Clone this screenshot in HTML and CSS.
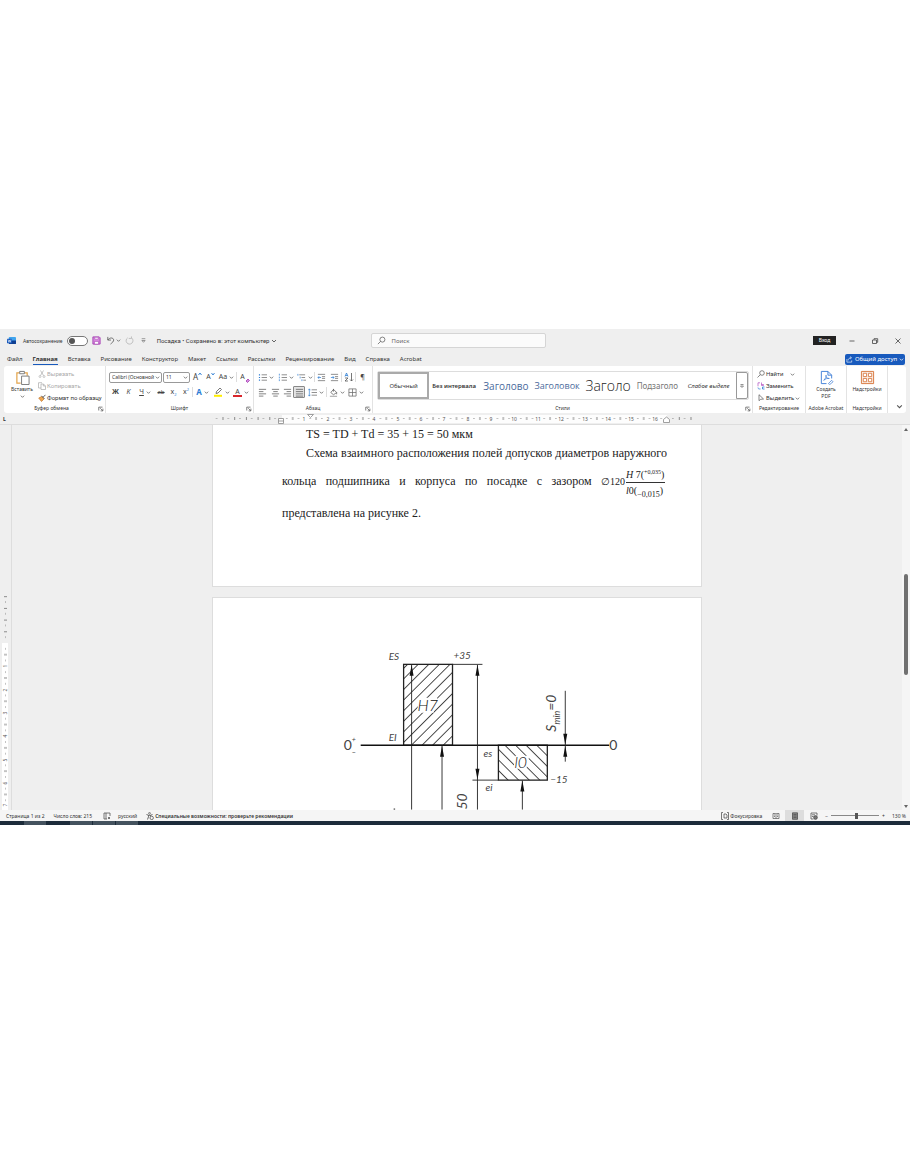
FILE: index.html
```html
<!DOCTYPE html>
<html lang="ru">
<head>
<meta charset="utf-8">
<title>Посадка</title>
<link rel="stylesheet" href="styles.css">
</head>
<body>
<svg class="defs" aria-hidden="true">
  <symbol id="chev" viewBox="0 0 6 6"><path d="M1 2l2 2 2-2" fill="none" stroke="#555" stroke-width=".9"/></symbol>
  <symbol id="launch" viewBox="0 0 8 8"><path d="M1 6V1.500h5M3 3l3 3M6.500 3.500v3h-3" fill="none" stroke="#444" stroke-width=".9"/></symbol>
  <symbol id="lines" viewBox="0 0 10 10"><path d="M4 2h6M4 5h6M4 8h6" stroke="#666" stroke-width=".8"/></symbol>
</svg>
<div class="app">
  <header class="titlebar">
    <svg class="logo" viewBox="0 0 10 10"><rect x="2" y="1" width="8" height="8" rx="1" fill="#41a5ee"/><path d="M2 5h8v3a1 1 0 0 1-1 1H3a1 1 0 0 1-1-1z" fill="#103f91"/><rect x="0" y="3" width="5.500" height="5" rx=".6" fill="#185abd"/><path d="M1.200 4l.8 3 .8-2.500.8 2.500.8-3" fill="none" stroke="#fff" stroke-width=".6"/></svg>
    <label class="autosave">Автосохранение <input type="checkbox" role="switch" class="switch"></label>
    <button class="ic save" aria-label="Сохранить"><svg viewBox="0 0 10 10"><path d="M1 1h7l1 1v7H1z" fill="#d98be0" stroke="#a33bb0"/><path d="M3 1.500h4v2H3zM2.800 6h4.400v3H2.800z" fill="#fff" stroke="#a33bb0" stroke-width=".6"/></svg></button>
    <button class="ic wide" aria-label="Отменить"><svg viewBox="0 0 10 10"><path d="M2 1v3.500h3.500M2 4.500C4 1.500 8 1.500 8.500 4.200 8.800 6 7 7.200 5 9" fill="none" stroke="#555" stroke-width=".9"/></svg><svg class="chev"><use href="#chev"/></svg></button>
    <button class="ic" aria-label="Повторить"><svg viewBox="0 0 10 10"><path d="M3 2a3.800 3.800 0 1 0 4.500.3M7.200.5v2.200h-3" fill="none" stroke="#b5b5b5" stroke-width=".9"/></svg></button>
    <button class="ic" aria-label="Настройка панели"><svg viewBox="0 0 10 10"><path d="M3 3h4M3.200 5h3.600L5 7z" fill="none" stroke="#777" stroke-width=".8"/></svg></button>
    <button class="doc">Посадка • Сохранено в: этот компьютер <svg class="chev big"><use href="#chev"/></svg></button>
    <label class="search"><svg viewBox="0 0 10 10"><circle cx="6" cy="4" r="2.800" fill="none" stroke="#555" stroke-width=".8"/><path d="M4 6L1 9" stroke="#555" stroke-width=".8"/></svg><input type="search" placeholder="Поиск" aria-label="Поиск"></label>
    <button class="login">Вход</button>
    <div class="wincontrols">
      <button aria-label="Свернуть"><svg viewBox="0 0 8 8"><path d="M1.500 4h5" stroke="#444" stroke-width=".8"/></svg></button>
      <button aria-label="Восстановить"><svg viewBox="0 0 8 8"><path d="M1.500 3h4v3.500h-4zM3 2.800V1.700h3.700v3.600H5.700" fill="none" stroke="#444" stroke-width=".8"/></svg></button>
      <button aria-label="Закрыть"><svg viewBox="0 0 8 8"><path d="M1.500 1.500l5 5M6.500 1.500l-5 5" stroke="#444" stroke-width=".8"/></svg></button>
    </div>
  </header>
  <nav class="tabs">
    <a href="#">Файл</a><a href="#" class="active">Главная</a><a href="#">Вставка</a><a href="#">Рисование</a><a href="#">Конструктор</a><a href="#">Макет</a><a href="#">Ссылки</a><a href="#">Рассылки</a><a href="#">Рецензирование</a><a href="#">Вид</a><a href="#">Справка</a><a href="#">Acrobat</a>
    <button class="share"><svg viewBox="0 0 8 8"><path d="M1 3.500V7h5.500V5M2.500 5c0-2 1.500-3 3.500-3M4.700.7L6.300 2 4.700 3.500" fill="none" stroke="#fff" stroke-width=".7"/></svg>Общий доступ<svg class="light" viewBox="0 0 6 6"><path d="M1 2l2 2 2-2" fill="none" stroke="#fff" stroke-width=".9"/></svg></button>
  </nav>
  <section class="ribbon">
    <div class="group clipboard">
      <div class="body">
        <button class="tall paste"><svg viewBox="0 0 16 16"><path d="M5 3H2v11h4M10 3h3v3" fill="none" stroke="#e3a44c" stroke-width="1.300"/><path d="M5 1.500h5V4H5z" fill="#fff" stroke="#777"/><path d="M7 6.500h8v9H7z" fill="#fff" stroke="#777"/></svg><span>Вставить</span><svg class="chev"><use href="#chev"/></svg></button>
        <div class="stack">
          <button class="line off"><svg viewBox="0 0 8 8"><path d="M2.500.5l3 5M5.500.5l-3 5" stroke="#aaa" stroke-width=".7"/><circle cx="2" cy="6.500" r="1" fill="none" stroke="#aaa" stroke-width=".6"/><circle cx="6" cy="6.500" r="1" fill="none" stroke="#aaa" stroke-width=".6"/></svg>Вырезать</button>
          <button class="line off"><svg viewBox="0 0 8 8"><path d="M3 6H.5V.7h3.500M3 2h2.500L7.500 4v3.500H3zM5.300 2v2h2" fill="none" stroke="#aaa" stroke-width=".7"/></svg>Копировать</button>
          <button class="line"><svg viewBox="0 0 8 8"><path d="M.7 4l3-1.500L6 5 3.500 7.500z" fill="#f0a850" stroke="#b86a20" stroke-width=".6"/><path d="M3.500 1.800l3 3M5 3.300L7.500.8" fill="none" stroke="#555" stroke-width=".9"/></svg>Формат по образцу</button>
        </div>
      </div>
      <div class="caption"><span>Буфер обмена</span><button class="launch" aria-label="Буфер обмена"><svg><use href="#launch"/></svg></button></div>
    </div>
    <div class="group font">
      <div class="body rows">
        <div class="row">
          <span class="pick name"><select aria-label="Шрифт"><option>Calibri (Основной текст)</option></select><svg class="chev"><use href="#chev"/></svg></span>
          <span class="pick size"><select aria-label="Размер"><option>11</option></select><svg class="chev"><use href="#chev"/></svg></span>
          <button class="t w13 lg">A<svg class="mark" viewBox="0 0 4 4"><path d="M.5 3L2 1l1.500 2" fill="none" stroke="#2b7cd3" stroke-width=".9"/></svg></button><button class="t w13">A<svg class="mark" viewBox="0 0 4 4"><path d="M.5 1L2 3l1.500-2" fill="none" stroke="#2b7cd3" stroke-width=".9"/></svg></button><button class="t w19">Aa<svg class="chev"><use href="#chev"/></svg></button><i class="sep"></i>
          <button class="t w16">A<svg class="eraser" viewBox="0 0 5 5"><path d="M1 3l2-2 1.500 1.500-2 2z" fill="#d48ae0" stroke="#a33bb0" stroke-width=".8"/></svg></button>
        </div>
        <div class="row">
          <button class="t w13"><b>Ж</b></button><button class="t w13"><em>К</em></button><button class="t w20"><u>Ч</u><svg class="chev"><use href="#chev"/></svg></button><button class="t w12 sm"><s>ab</s></button><button class="t w13">x<sub>2</sub></button><button class="t w12">x<sup>2</sup></button><i class="sep"></i>
          <button class="t w19 glow">A<svg class="chev"><use href="#chev"/></svg></button><button class="t w19" aria-label="Выделение"><svg class="i10" viewBox="0 0 10 10"><path d="M3 6.500l.5-2L7 1l1.500 1.500L5 6z" fill="#fff" stroke="#555" stroke-width=".8"/><path d="M1 8.800h8" stroke="#ffee00" stroke-width="2"/></svg><svg class="chev"><use href="#chev"/></svg></button><button class="t w20"><span class="redline">A</span><svg class="chev"><use href="#chev"/></svg></button>
        </div>
      </div>
      <div class="caption"><span>Шрифт</span><button class="launch" aria-label="Шрифт"><svg><use href="#launch"/></svg></button></div>
    </div>
    <div class="group para">
      <div class="body rows">
        <div class="row">
          <button class="t w20" aria-label="Маркеры"><svg class="i9" viewBox="0 0 10 10"><use href="#lines"/><path d="M1 2h1.300M1 5h1.300M1 8h1.300" stroke="#2b7cd3" stroke-width="1.300"/></svg><svg class="chev"><use href="#chev"/></svg></button><button class="t w19" aria-label="Нумерация"><svg class="i9" viewBox="0 0 10 10"><use href="#lines"/><path d="M1.500.8v2M1.500 4v2M1.500 7v2" stroke="#2b7cd3" stroke-width=".8"/></svg><svg class="chev"><use href="#chev"/></svg></button><button class="t w19" aria-label="Многоуровневый список"><svg class="i9" viewBox="0 0 10 10"><path d="M2.500 2H9M5 5h4M7 8h3" stroke="#666" stroke-width=".8"/><path d="M1 1v2M3.500 4v2M5.500 7v2" stroke="#2b7cd3" stroke-width=".8"/></svg><svg class="chev"><use href="#chev"/></svg></button><i class="sep"></i>
          <button class="t w13" aria-label="Уменьшить отступ"><svg class="i9" viewBox="0 0 10 10"><path d="M1 1.500h8M5.500 4H9M5.500 6H9M1 8.500h8" stroke="#666" stroke-width=".8"/><path d="M4.500 5H1M2.500 3.500L1 5l1.500 1.500" fill="none" stroke="#2b7cd3" stroke-width=".8"/></svg></button><button class="t w13" aria-label="Увеличить отступ"><svg class="i9" viewBox="0 0 10 10"><path d="M1 1.500h8M5.500 4H9M5.500 6H9M1 8.500h8" stroke="#666" stroke-width=".8"/><path d="M1 5h3.500M3 3.500L4.500 5 3 6.500" fill="none" stroke="#2b7cd3" stroke-width=".8"/></svg></button><i class="sep"></i>
          <button class="t w13" aria-label="Сортировка"><svg class="i10" viewBox="0 0 10 10"><path d="M1 4.500L2.500 1 4 4.500M1.500 3.500h2" fill="none" stroke="#2b7cd3" stroke-width=".8"/><path d="M1 6h3L1 9h3M7.500 1v8M6 7.500L7.500 9 9 7.500" fill="none" stroke="#555" stroke-width=".8"/></svg></button><i class="sep"></i><button class="t w13">¶</button>
        </div>
        <div class="row">
          <button class="t w13" aria-label="По левому краю"><svg class="i9" viewBox="0 0 10 10"><path d="M1 1.500h8M1 4h5M1 6.500h8M1 9h5" stroke="#555" stroke-width=".8"/></svg></button><button class="t w12" aria-label="По центру"><svg class="i9" viewBox="0 0 10 10"><path d="M1 1.500h8M2.500 4h5M1 6.500h8M2.500 9h5" stroke="#555" stroke-width=".8"/></svg></button><button class="t w12" aria-label="По правому краю"><svg class="i9" viewBox="0 0 10 10"><path d="M1 1.500h8M4 4h5M1 6.500h8M4 9h5" stroke="#555" stroke-width=".8"/></svg></button><button class="t w12 on" aria-label="По ширине"><svg class="i9" viewBox="0 0 10 10"><path d="M1 1.500h8M1 4h8M1 6.500h8M1 9h8" stroke="#555" stroke-width=".8"/></svg></button><button class="t w21" aria-label="Интервал"><svg class="i9" viewBox="0 0 10 10"><use href="#lines"/><path d="M1.500 1v8M.3 2.500L1.500 1l1.200 1.500M.3 7.500L1.500 9l1.200-1.500" fill="none" stroke="#2b7cd3" stroke-width=".7"/></svg><svg class="chev"><use href="#chev"/></svg></button><i class="sep"></i>
          <button class="t w19" aria-label="Заливка"><svg class="i9" viewBox="0 0 10 10"><path d="M2 5l3-3.500L8.500 5 5 7.500zM5 1v3M8.500 5v2" fill="none" stroke="#555" stroke-width=".8"/><path d="M1 9.200h8" stroke="#999"/></svg><svg class="chev"><use href="#chev"/></svg></button><button class="t w19" aria-label="Границы"><svg class="i9" viewBox="0 0 10 10"><path d="M1 1h8v8H1zM5 1v8M1 5h8" fill="none" stroke="#666" stroke-width=".8"/></svg><svg class="chev"><use href="#chev"/></svg></button>
        </div>
      </div>
      <div class="caption"><span>Абзац</span><button class="launch" aria-label="Абзац"><svg><use href="#launch"/></svg></button></div>
    </div>
    <div class="group styles">
      <div class="body">
        <div class="gallery">
          <button class="chosen">Обычный</button><button class="semi">Без интервала</button><button class="h1">Заголово</button><button class="h2">Заголовок</button><button class="h0">Заголо</button><button class="sub">Подзаголо</button><button class="weak">Слабое выделе</button>
          <button class="more" aria-label="Ещё"><svg viewBox="0 0 6 6"><path d="M1.500 1.500h3M1.500 3L3 4.500 4.500 3z" fill="none" stroke="#666" stroke-width=".7"/></svg></button>
        </div>
      </div>
      <div class="caption"><span>Стили</span><button class="launch" aria-label="Стили"><svg><use href="#launch"/></svg></button></div>
    </div>
    <div class="group edit">
      <div class="body"><div class="stack">
        <button class="line"><svg viewBox="0 0 8 8"><circle cx="5" cy="3" r="2.300" fill="none" stroke="#555" stroke-width=".7"/><path d="M3.300 4.700L.5 7.500" stroke="#555" stroke-width=".7"/></svg>Найти<svg class="chev far"><use href="#chev"/></svg></button>
        <button class="line"><svg viewBox="0 0 8 8"><path d="M3 .8H1v3.500M4.500.5v3M4.500 2.500h2v1h-2" fill="none" stroke="#b04ec0" stroke-width=".7"/><path d="M1 5.500c0 1.500 1 1.500 2.500 1.500M7.500 5H5.500v2h2" fill="none" stroke="#2b7cd3" stroke-width=".8"/></svg>Заменить</button>
        <button class="line"><svg viewBox="0 0 8 8"><path d="M2 .7v6L3.700 5.300 6.500 5z" fill="none" stroke="#555" stroke-width=".7"/></svg>Выделить<svg class="chev"><use href="#chev"/></svg></button>
      </div></div>
      <div class="caption"><span>Редактирование</span></div>
    </div>
    <div class="group acro">
      <div class="body"><button class="tall"><svg viewBox="0 0 16 16"><path d="M8 14.500H2.500V1.500h7l4 4V9M9.500 1.500v4h4" fill="none" stroke="#3f7fd6"/><path d="M5 11c2-2 3-4 2.500-5.500C7 8 9 9.500 11 9c-2-.6-4 .5-6 2zM10 14.500l3.500-3.500 1.500 1.500-3.500 3z" fill="none" stroke="#3f7fd6" stroke-width=".8"/></svg><span>Создать<br>PDF</span></button></div>
      <div class="caption"><span>Adobe Acrobat</span></div>
    </div>
    <div class="group addin">
      <div class="body"><button class="tall"><svg viewBox="0 0 16 16"><path d="M1.500 1.500h13v13h-13z" fill="#fbeee6" stroke="#d6753c"/><path d="M3.500 3.500H7V7H3.500zM9 3.500h3.500V7H9zM3.500 9H7v3.500H3.500zM9 9h3.500v3.500H9z" fill="#fff" stroke="#d6753c" stroke-width=".9"/></svg><span>Надстройки</span></button></div>
      <div class="caption"><span>Надстройки</span></div>
    </div>
    <button class="collapse" aria-label="Свернуть ленту"><svg class="chev big"><use href="#chev"/></svg></button>
  </section>
  <div class="ruler">
    <span class="corner">L</span>
    <svg class="hruler" viewBox="0 0 490 11">
      <defs><pattern id="pa" x="69" width="23.400" height="11" patternUnits="userSpaceOnUse"><path d="M5.800 5v1M17.500 5v1M11.700 4v3" stroke="#888" stroke-width="1"/></pattern>
      <pattern id="pb" x="69" width="11.700" height="11" patternUnits="userSpaceOnUse"><path d="M5.800 5v1M.5 4v3" stroke="#888" stroke-width="1"/></pattern></defs>
      <rect x="70" y="2" width="385" height="8" fill="#fdfdfd"/>
      <rect x="0" width="69" height="11" fill="url(#pb)"/><rect x="70" width="385" height="11" fill="url(#pa)"/><rect x="457" width="24" height="11" fill="url(#pb)"/>
      <g class="nums"><text x="92" y="8">1</text><text x="116" y="8">2</text><text x="139" y="8">3</text><text x="162" y="8">4</text><text x="186" y="8">5</text><text x="209" y="8">6</text><text x="232" y="8">7</text><text x="256" y="8">8</text><text x="279" y="8">9</text><text x="302" y="8">10</text><text x="326" y="8">11</text><text x="349" y="8">12</text><text x="373" y="8">13</text><text x="396" y="8">14</text><text x="419" y="8">15</text><text x="443" y="8">16</text></g>
      <path d="M66.500 5.500h5v5h-5zM66.500 8h5M95.500 1.500h6L98.500 4.500zM451.500 9.500v-3l3-2.500 3 2.500v3z" fill="#fff" stroke="#888" stroke-width=".8"/>
    </svg>
  </div>
  <main class="work">
    <svg class="vruler" viewBox="0 0 11 385">
      <defs><pattern id="pv" y="218" width="12" height="23.300" patternUnits="userSpaceOnUse"><path d="M5 5.800h1M4 11.700h3M5 17.500h1" stroke="#888"/></pattern>
      <pattern id="pw" y="218" width="12" height="11.700" patternUnits="userSpaceOnUse"><path d="M4 .5h3M5 5.800h1" stroke="#888"/></pattern></defs>
      <rect x="2" y="218" width="6" height="167" fill="#fff"/><rect y="171" width="11" height="46" fill="url(#pw)"/><rect y="219" width="11" height="166" fill="url(#pv)"/>
      <g class="nums"><text transform="translate(7 241) rotate(-90)">1</text><text transform="translate(7 265) rotate(-90)">2</text><text transform="translate(7 288) rotate(-90)">3</text><text transform="translate(7 311) rotate(-90)">4</text><text transform="translate(7 335) rotate(-90)">5</text><text transform="translate(7 358) rotate(-90)">6</text><text transform="translate(7 380) rotate(-90)">7</text></g>
    </svg>
    <div class="canvas">
      <article class="page first">
        <p class="ind">TS = TD + Td = 35 + 15 = 50 мкм</p>
        <p class="ind full">Схема взаимного расположения полей допусков диаметров наружного</p>
        <p class="full formula">кольца подшипника и корпуса по посадке с зазором <span class="math">∅120<span class="frac"><span class="num"><i>H</i> 7(<sup>+0,035</sup>)</span><span class="den"><i>l</i>0(<sub>−0,015</sub>)</span></span></span></p>
        <p class="last">представлена на рисунке 2.</p>
      </article>
      <article class="page second">
        <svg class="drawing" viewBox="212 598 489 212">
          <defs>
            <pattern id="hat" width="7.500" height="7.500" patternUnits="userSpaceOnUse" patternTransform="rotate(45 403 665)"><path d="M0 0v7.500" stroke="#222" stroke-width="1.600"/></pattern>
            <pattern id="hat2" width="7.500" height="7.500" patternUnits="userSpaceOnUse" patternTransform="rotate(-45 498 746)"><path d="M0 0v7.500" stroke="#222" stroke-width="1.600"/></pattern>
          </defs>
          <rect x="403" y="664.500" width="49" height="81" fill="url(#hat)" stroke="#222" stroke-width="1.300"/>
          <rect x="498" y="745.500" width="49" height="35" fill="url(#hat2)" stroke="#222" stroke-width="1.300"/>
          <path d="M419 698h18l-4 15h-17zM515 756h14l-3 13h-13z" fill="#fff"/>
          <path d="M360 745.500h249" stroke="#111" stroke-width="1.500"/>
          <path d="M452 664.500h30M472 780.500h26M477 665v145M411 665v145M441.500 746v64M522 781v29M565 691v71" stroke="#222" stroke-width=".9"/>
          <path d="M411 665l2 11h-4zM441.500 746l2 11h-4zM477 665l2 11h-4zM477 780l2-11h-4zM522 781l2 11h-4zM565 745l2-11h-4zM565 746l2 11h-4z" fill="#111"/>
          <path d="M393 809.500h1.500" stroke="#222"/>
          <g class="gost">
            <text x="388" y="660">ES</text><text x="453" y="659">+35</text><text x="388" y="741">EI</text><text x="483" y="757">es</text><text x="485" y="791">ei</text><text x="550" y="783">−15</text>
            <text class="big" x="417" y="711">H7</text><text class="big" x="514" y="768">l0</text>
            <text class="zero" x="343" y="750">0</text><text class="zero" x="609" y="750">0</text><text x="351" y="742" class="tiny">+</text><text x="351" y="755" class="tiny">−</text>
            <text class="mid" transform="translate(556 732) rotate(-90)">S<tspan dy="4" class="tinysub">min</tspan><tspan dy="-4">=0</tspan></text>
            <text class="mid" transform="translate(467 810) rotate(-90)">50</text>
          </g>
        </svg>
      </article>
    </div>
    <div class="scroll"><svg viewBox="0 0 8 8"><path d="M2 6h4L4 3z" fill="#666"/></svg><i class="thumb"></i><svg viewBox="0 0 8 8"><path d="M2 3h4L4 6z" fill="#666"/></svg></div>
  </main>
  <footer class="status">
    <span>Страница 1 из 2</span><span>Число слов: 215</span>
    <svg viewBox="0 0 8 8"><path d="M4 7H1V1h6v3M3 1v6M5 5l2 2M7 5L5 7" fill="none" stroke="#555" stroke-width=".8"/></svg>
    <span>русский</span>
    <span class="access"><svg viewBox="0 0 8 8"><circle cx="3.500" cy="1.300" r=".9" fill="none" stroke="#444" stroke-width=".6"/><path d="M.5 2.500l2 .8v1.500L1.500 7.500M6.500 2.500l-2 .8v1M2.500 3.300h2" fill="none" stroke="#444" stroke-width=".8"/><circle cx="5.700" cy="5.900" r="1.700" fill="none" stroke="#444" stroke-width=".7"/></svg>Специальные возможности: проверьте рекомендации</span>
    <span class="focus"><svg viewBox="0 0 8 8"><path d="M2 .5H.5v7H2M6 .5h1.500v7H6M3 2h2l1 1v3H3z" fill="none" stroke="#444" stroke-width=".7"/></svg>Фокусировка</span>
    <button class="view" aria-label="Режим чтения"><svg viewBox="0 0 8 8"><path d="M1 1.500h2.500l.5.500.5-.5H7V6.500H1zM4 2v4.500M2 3h1M2 4.500h1M5 3h1M5 4.500h1" fill="none" stroke="#555" stroke-width=".7"/></svg></button>
    <button class="view cur" aria-label="Разметка страницы"><svg viewBox="0 0 8 8"><path d="M1.500.8h5v6.500h-5z" fill="#888" stroke="#444" stroke-width=".7"/><path d="M2.500 2.500h3M2.500 4h3M2.500 5.500h3" stroke="#444" stroke-width=".6"/></svg></button>
    <button class="view" aria-label="Веб-документ"><svg viewBox="0 0 8 8"><path d="M1 1h6v2.500M1 1v6h2.500M2 2.800h3M2 4.500h1.500" fill="none" stroke="#444" stroke-width=".7"/><circle cx="5.500" cy="5.500" r="1.900" fill="#777" stroke="#444" stroke-width=".6"/></svg></button>
    <span class="zoomer"><span>−</span><input type="range" min="0" max="100" value="54" aria-label="Масштаб"><span>+</span><span class="pct">130 %</span></span>
  </footer>
  <div class="taskbar"><i></i><i></i><i></i><i></i></div>
</div>
</body>
</html>
```
FILE: styles.css
```css
* { box-sizing: border-box; }
body { margin: 0; padding-top: 329px; background: #fff; color: #333; font: 6px/8px "Noto Sans", "Open Sans", sans-serif; }
button, input, select { font: inherit; color: inherit; background: none; border: 0; padding: 0; margin: 0; }
a { color: inherit; text-decoration: none; }
svg { display: block; flex: none; }
.defs { position: absolute; width: 0; height: 0; }
.app { background: #efefef; overflow: hidden; }
.chev { width: 5px; height: 5px; }
.chev.big { width: 7px; height: 7px; }

.titlebar { display: flex; align-items: center; height: 23px; padding: 0 1px 0 7px; white-space: nowrap; }
.logo { width: 9px; height: 9px; }
.autosave { display: flex; align-items: center; gap: 4px; margin-left: 7px; font-size: 5px; }
.switch { appearance: none; width: 21px; height: 10px; border: 1px solid #777; border-radius: 5px; background: #fff; display: flex; align-items: center; }
.switch::before { content: ""; width: 6px; height: 6px; margin-left: 1px; border-radius: 50%; background: #555; }
.ic { display: flex; align-items: center; width: 14px; }
.ic svg:first-child { width: 9px; height: 9px; }
.ic.save { margin-left: 4px; }
.ic.wide { width: 19px; gap: 1px; }
.doc { display: flex; align-items: center; gap: 2px; margin-left: 4px; font-family: Roboto, sans-serif; font-size: 6px; }
.doc .big { width: 6px; height: 6px; }
.search { display: flex; align-items: center; gap: 5px; width: 175px; height: 15px; margin-left: 94px; padding: 0 5px; background: #fbfbfb; border: 1px solid #d5d5d5; border-radius: 2px; }
.search svg { width: 9px; height: 9px; }
.search input { width: 100%; outline: 0; }
.search input::placeholder { color: #666; opacity: 1; }
.login { width: 23px; height: 9px; margin-left: auto; background: #222; color: #fff; font-size: 5px; line-height: 9px; }
.wincontrols { display: flex; margin-left: 4px; }
.wincontrols button { width: 23px; display: flex; justify-content: center; }
.wincontrols svg { width: 8px; height: 8px; }

.tabs { display: flex; align-items: center; gap: 10px; height: 14px; padding: 0 5px 0 7px; white-space: nowrap; }
.tabs a { height: 12px; line-height: 12px; }
.tabs .active { font-weight: 700; border-bottom: 1px solid #185abd; }
.share { display: flex; align-items: center; justify-content: center; gap: 2px; width: 60px; height: 11px; margin-left: auto; background: #185abd; color: #fff; border-radius: 2px; }
.share svg { width: 7px; height: 7px; }
.share .light { width: 5px; height: 5px; }

.ribbon { display: flex; height: 47px; margin: 0 4px; background: #fff; border-radius: 3px; white-space: nowrap; }
.group { display: flex; flex-direction: column; border-right: 1px solid #e3e3e3; flex: none; }
.clipboard { width: 102px; }
.font { width: 148px; }
.para { width: 119px; }
.styles { flex: 1; min-width: 0; }
.edit { width: 53px; }
.acro { width: 41px; }
.addin { width: 41px; }
.body { display: flex; height: 38px; padding: 2px 2px 0; }
.edit .body { padding-left: 4px; }
.caption { position: relative; height: 9px; text-align: center; font-size: 5px; line-height: 9px; }
.clipboard .caption { padding-right: 6px; }
.launch { position: absolute; right: 1px; top: 2px; }
.launch svg { width: 6px; height: 6px; }
.tall { display: flex; flex-direction: column; align-items: center; width: 100%; padding-top: 2px; font-size: 5px; line-height: 7px; }
.tall svg:first-child { width: 15px; height: 15px; margin-bottom: 1px; }
.tall .chev { margin-top: 1px; }
.tall.paste { width: 32px; }
.stack { display: flex; flex-direction: column; height: 36px; }
.line { display: flex; align-items: center; gap: 1px; height: 12px; font-family: Roboto, sans-serif; font-size: 6px; }
.line svg { width: 8px; height: 8px; }
.line .chev { width: 5px; height: 5px; }
.line .far { margin-left: 6px; }
.off { color: #aaa; }
.rows { flex-direction: column; gap: 1px; }
.row { display: flex; align-items: center; height: 14px; }
.font .rows { padding: 4px 0 0 3px; }
.para .rows { padding: 4px 0 0 2px; }
.pick { display: flex; align-items: center; height: 11px; padding: 0 1px 0 2px; margin-right: 1px; border: 1px solid #999; border-radius: 2px; }
.pick select { appearance: none; flex: 1; min-width: 0; overflow: hidden; text-overflow: clip; font-size: 5px; line-height: 9px; }
.name { width: 53px; }
.size { width: 27px; }
.t { display: flex; align-items: center; justify-content: center; gap: 2px; height: 12px; font-size: 7px; line-height: 10px; color: #444; }
.t sup, .t sub { font-size: 4px; line-height: 4px; color: #2b7cd3; }
.t sup { align-self: flex-start; margin-top: 2px; }
.t sub { align-self: flex-end; margin-bottom: 1px; }
.t:has(sup), .t:has(sub), .t:has(.eraser), .t:has(.mark) { gap: 0; }
.mark { width: 4px; height: 4px; align-self: flex-start; margin-top: 1px; }
.lg { font-size: 8px; }
.sm { font-size: 6px; }
.w12 { width: 12px; } .w13 { width: 13px; } .w16 { width: 16px; } .w19 { width: 19px; } .w20 { width: 20px; } .w21 { width: 21px; }
.i9 { width: 9px; height: 9px; }
.i10 { width: 10px; height: 10px; }
.eraser { width: 5px; height: 5px; align-self: flex-end; }
.glow { color: #2b7cd3; font-size: 8px; font-weight: 700; }
.redline { border-bottom: 2px solid #d8252b; line-height: 7px; padding: 0 2px; }
.sep { width: 1px; height: 10px; background: #ddd; }
.on { background: #e4e4e4; border: 1px solid #888; border-radius: 1px; }
.gallery { display: flex; width: 100%; height: 29px; margin: 3px 1px 0 2px; border: 1px solid #ddd; border-radius: 2px; }
.gallery button { flex: 1 1 51px; min-width: 0; overflow: hidden; padding: 0 3px; text-align: left; }
.gallery .chosen { border: 2px solid #aaa; text-align: center; padding: 0; }
.gallery .semi { font-weight: 600; padding: 0 3px; }
.gallery .h1 { color: #4a6a9c; font-family: "Open Sans", sans-serif; font-size: 10px; line-height: 16px; }
.gallery .h2 { color: #4a6a9c; font-family: "Open Sans", sans-serif; font-size: 9px; line-height: 14px; }
.gallery .h0 { color: #222; font-family: "Open Sans", sans-serif; font-weight: 300; font-size: 14px; line-height: 20px; }
.gallery .sub { color: #777; font-size: 8px; line-height: 14px; }
.gallery .weak { font-style: italic; }
.gallery .more { flex: 0 0 12px; padding: 0 2px; border: 1px solid #999; border-radius: 0 2px 2px 0; }
.more svg { width: 6px; height: 6px; }
.collapse { flex: 0 0 18px; display: flex; align-items: flex-end; justify-content: flex-end; padding: 0 3px 3px 0; }

.ruler { position: relative; display: flex; justify-content: center; height: 12px; padding-left: 4px; border-bottom: 1px solid #ddd; }
.corner { position: absolute; left: 3px; top: 2px; font-size: 5px; font-weight: 700; }
.hruler { width: 490px; height: 11px; }
.nums { font-size: 5px; fill: #555; text-anchor: middle; }
.work { display: flex; }
.vruler { width: 11px; height: 385px; }
.canvas { flex: 1; display: flex; flex-direction: column; align-items: center; gap: 10px; height: 385px; overflow: hidden; border-left: 1px solid #ddd; }
.page { width: 490px; max-width: 100%; background: #fff; border: 1px solid #ddd; flex: none; }
.first { border-top: 0; height: 162px; padding: 0 34px 0 69px; color: #222; font: 12px/19px "Liberation Serif", serif; }
.page p { margin: 0; }
.ind { text-indent: 24px; }
.full { text-align: justify; text-align-last: justify; }
.page .formula { height: 36px; line-height: 36px; }
.page .last { line-height: 28px; }
.math { display: inline-flex; align-items: center; height: 34px; margin-right: 2px; vertical-align: middle; font-size: 10px; }
.frac { display: inline-flex; flex-direction: column; width: 39px; margin-left: 1px; line-height: 15px; text-align: left; text-align-last: left; white-space: nowrap; }
.frac sup { font-size: 6px; line-height: 6px; }
.frac sub { font-size: 8px; line-height: 6px; }
.num { border-bottom: 1px solid #333; }
.second { min-height: 214px; border-bottom: 0; }
.drawing { width: 100%; }
.gost { font: italic 400 10px Lato, sans-serif; fill: #444; }
.gost .big { font-size: 16px; font-weight: 300; fill: #111; }
.gost .zero { font-size: 14px; font-style: normal; }
.gost .mid { font-size: 14px; }
.gost .tiny { font-size: 7px; }
.gost .tinysub { font-size: 9px; }
.scroll { width: 8px; display: flex; flex-direction: column; align-items: center; background: #f5f5f5; }
.scroll svg { width: 8px; height: 8px; }
.thumb { width: 4px; height: 101px; margin: 141px 0 auto; border-radius: 2px; background: #707070; }

.status { display: flex; align-items: center; height: 11px; padding: 0 4px 0 6px; background: #f5f5f5; font-size: 5px; white-space: nowrap; }
.status > span { margin-right: 9px; }
.status svg { width: 8px; height: 8px; }
.status > svg { margin: 0 7px 0 2px; }
.access, .focus { display: flex; align-items: center; gap: 1px; }
.access { font-weight: 600; }
.status .focus { margin: 0 4px 0 auto; }
.view { display: flex; justify-content: center; align-items: center; width: 19px; height: 11px; }
.cur { background: #ddd; }
.status .zoomer { display: flex; align-items: center; gap: 3px; margin: 0 0 0 2px; }
.zoomer input { appearance: none; width: 48px; height: 8px; background: linear-gradient(#888, #888) center / 100% 1px no-repeat; }
.zoomer input::-webkit-slider-thumb { appearance: none; width: 3px; height: 6px; background: #555; }
.pct { margin-left: 4px; }
.taskbar { display: flex; gap: 1px; height: 4px; padding-left: 24px; background: #1c2b3a; }
.taskbar i { width: 22px; background: #44525e; }
.taskbar i:first-child { margin-right: 23px; }
```
